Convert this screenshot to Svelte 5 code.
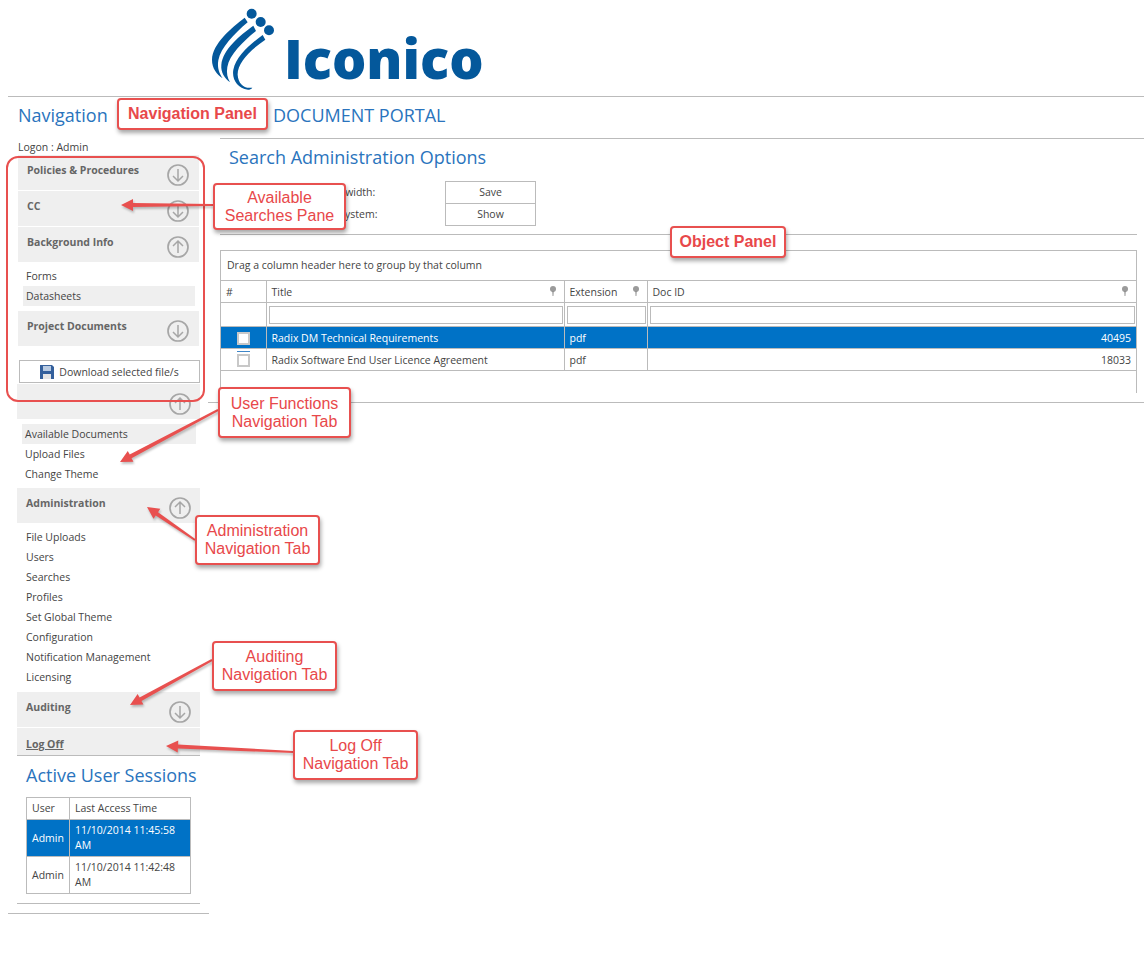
<script>
  const searches = [
    { name: 'Policies & Procedures', open: false },
    { name: 'CC', open: false },
    { name: 'Background Info', open: true, items: ['Forms', 'Datasheets'] },
    { name: 'Project Documents', open: false }
  ];
  const userItems = ['Available Documents', 'Upload Files', 'Change Theme'];
  const adminItems = ['File Uploads', 'Users', 'Searches', 'Profiles', 'Set Global Theme', 'Configuration', 'Notification Management', 'Licensing'];
  const docs = [
    { title: 'Radix DM Technical Requirements', ext: 'pdf', id: 40495, selected: true },
    { title: 'Radix Software End User Licence Agreement', ext: 'pdf', id: 18033 }
  ];
  const sessions = [
    { user: 'Admin', time: '11/10/2014 11:45:58 AM', selected: true },
    { user: 'Admin', time: '11/10/2014 11:42:48 AM' }
  ];
  const arrows = [
    [213, 205, 121, 205],
    [218, 410, 120, 462],
    [195, 540, 147, 507],
    [212, 660, 130, 705],
    [293, 752, 166, 746]
  ];

  // arrow body plus head, as one polygon
  function arrowPoints([x1, y1, x2, y2]) {
    const len = Math.hypot(x2 - x1, y2 - y1);
    const ux = (x2 - x1) / len, uy = (y2 - y1) / len;
    const nx = -uy, ny = ux;
    const bx = x2 - ux * 12, by = y2 - uy * 12;
    const p = [
      [x1 + nx * 1, y1 + ny * 1], [bx + nx * 2, by + ny * 2], [bx + nx * 6, by + ny * 6],
      [x2, y2],
      [bx - nx * 6, by - ny * 6], [bx - nx * 2, by - ny * 2], [x1 - nx * 1, y1 - ny * 1]
    ];
    return p.map((q) => q.join(',')).join(' ');
  }
</script>

{#snippet toggle(open)}
  <svg class="toggle" width="24" height="24" viewBox="0 0 24 24" fill="none" stroke="#a6a6a6">
    <circle cx="12" cy="12" r="10" stroke-width="1.7" />
    {#if open}
      <path d="M12 18V6.5M7 11l5-5 5 5" stroke-width="1.5" />
    {:else}
      <path d="M12 6v11.5M7 13l5 5 5-5" stroke-width="1.5" />
    {/if}
  </svg>
{/snippet}

{#snippet pin()}
  <svg class="pin" width="8" height="11" viewBox="0 0 8 11">
    <circle cx="4" cy="3" r="3" fill="#9a9a9a" />
    <path d="M3.3 5h1.4l-.3 5h-.8z" fill="#8a8a8a" />
  </svg>
{/snippet}

<div class="page">
  <header class="logo-bar">
    <svg class="logo-mark" width="80" height="94" viewBox="0 0 240 280" fill="#04589b">
      <circle cx="155" cy="40" r="15" />
      <circle cx="182" cy="65" r="15" />
      <circle cx="207" cy="90" r="15" />
      <path d="M134 52C95 82 37 130 36 178c0 26 14 44 32 56-10-14-17-32-13-54 7-38 48-80 88-114z" />
      <path d="M160 76c-38 28-92 70-96 118-2 22 10 40 26 52-8-14-11-28-8-46 6-36 46-76 86-108z" />
      <path d="M188 104c-36 26-80 64-88 104-5 28 12 56 44 60 5 0 10-2 13-6-26 4-42-12-44-38-2-34 36-74 83-106z" />
    </svg>
    <span class="logo-text">Iconico</span>
  </header>

  <div class="columns">
    <aside class="nav">
      <h2 class="nav-title">Navigation</h2>
      <div class="logon">Logon : Admin</div>

      <div class="searches">
        {#each searches as group}
          <div class="tab">
            <span>{group.name}</span>
            {@render toggle(group.open)}
          </div>
          {#if group.items}
            <ul class="links searches-links">
              {#each group.items as item, i}
                <li class:shaded={i === 1}>{item}</li>
              {/each}
            </ul>
          {/if}
        {/each}
        <button class="download" type="button">
          <svg width="14" height="14" viewBox="0 0 14 14">
            <path d="M0 0h12l2 2v12H0z" fill="#34609c" />
            <rect x="3" y="1" width="8" height="5" fill="#b9cbe2" />
            <rect x="3" y="9" width="8" height="5" fill="#e6e6e6" />
          </svg>
          Download selected file/s
        </button>
      </div>

      <div class="tabs">
        <div class="tab tab-blank">{@render toggle(true)}</div>
        <ul class="links user-links">
          {#each userItems as item, i}
            <li class:shaded={i === 0}>{item}</li>
          {/each}
        </ul>
        <div class="tab"><span>Administration</span>{@render toggle(true)}</div>
        <ul class="links admin-links">
          {#each adminItems as item}
            <li>{item}</li>
          {/each}
        </ul>
        <div class="tab"><span>Auditing</span>{@render toggle(false)}</div>
        <div class="tab logoff"><span>Log Off</span></div>
        <h2 class="sessions-title">Active User Sessions</h2>
        <table class="sessions">
          <thead>
            <tr><th class="user-col">User</th><th>Last Access Time</th></tr>
          </thead>
          <tbody>
            {#each sessions as s}
              <tr class:selected={s.selected}><td>{s.user}</td><td>{s.time}</td></tr>
            {/each}
          </tbody>
        </table>
        <div class="rule-inner"></div>
      </div>
      <div class="rule-outer"></div>
    </aside>

    <main class="content">
      <div class="portal">DOCUMENT PORTAL</div>
      <h2 class="section-title">Search Administration Options</h2>

      <div class="options">
        <div class="option"><span>Save column order and width:</span><button type="button">Save</button></div>
        <div class="option"><span>Show filter for column system:</span><button type="button">Show</button></div>
      </div>

      <div class="grid">
        <div class="group-hint">Drag a column header here to group by that column</div>
        <table class="docs">
          <colgroup><col class="c1" /><col class="c2" /><col class="c3" /><col /></colgroup>
          <thead>
            <tr>
              <th>#</th>
              <th><div class="head">Title{@render pin()}</div></th>
              <th><div class="head">Extension{@render pin()}</div></th>
              <th><div class="head">Doc ID{@render pin()}</div></th>
            </tr>
            <tr class="filters">
              <th></th>
              <th><input type="text" /></th>
              <th><input type="text" /></th>
              <th><input type="text" /></th>
            </tr>
          </thead>
          <tbody>
            {#each docs as doc}
              <tr class:selected={doc.selected}>
                <td class="check"><span class="box" class:marked={!doc.selected}></span></td>
                <td>{doc.title}</td>
                <td>{doc.ext}</td>
                <td class="num">{doc.id}</td>
              </tr>
            {/each}
          </tbody>
        </table>
      </div>
      <div class="rule-bottom"></div>
    </main>
  </div>

  <!-- annotations drawn over the screenshot -->
  <div class="ring"></div>
  <svg class="arrows" width="1144" height="961">
    {#each arrows as a}
      <polygon points={arrowPoints(a)} fill="#e8504f" />
    {/each}
  </svg>
  <div class="note bold n-nav">Navigation Panel</div>
  <div class="note n-search">Available<br />Searches Pane</div>
  <div class="note bold n-object">Object Panel</div>
  <div class="note n-user">User Functions<br />Navigation Tab</div>
  <div class="note n-admin">Administration<br />Navigation Tab</div>
  <div class="note n-audit">Auditing<br />Navigation Tab</div>
  <div class="note n-logoff">Log Off<br />Navigation Tab</div>
</div>

<style>
  :global(body) {
    background: #fff;
    color: #444;
    font-family: "Open Sans", "Noto Sans", sans-serif;
    font-size: 10.5px;
  }

  .page {
    position: relative;
    width: 1144px;
    height: 961px;
    overflow: hidden;
  }

  .logo-bar {
    height: 96px;
    margin-left: 8px;
    border-bottom: 1px solid #bbb;
    display: flex;
    align-items: flex-start;
    padding-left: 192px;
  }

  .logo-text {
    margin: 23px 0 0 4px;
    font-size: 54px;
    line-height: 70px;
    font-weight: 800;
    color: #04589b;
  }

  .columns {
    display: flex;
  }

  .nav {
    width: 201px;
    margin-left: 8px;
    flex: none;
  }

  .nav-title {
    margin: 0 0 0 10px;
    height: 36px;
    line-height: 36px;
    font-size: 18px;
    font-weight: 400;
    color: #2a74bd;
  }

  .logon {
    margin: 6px 0 0 10px;
    height: 16px;
    line-height: 16px;
  }

  .searches {
    margin-left: 10px;
    width: 181px;
  }

  .tab {
    height: 35px;
    margin-bottom: 1px;
    padding: 7px 9px 0 9px;
    box-sizing: border-box;
    background: #efefef;
    display: flex;
    justify-content: space-between;
    overflow: hidden;
    font-weight: 700;
    line-height: 16px;
    color: #666;
  }

  .toggle {
    flex: none;
    margin-top: 1px;
  }

  .links {
    list-style: none;
    margin: 0;
    padding: 0;
  }

  .links li {
    height: 20px;
    line-height: 20px;
    padding-left: 3px;
  }

  .links .shaded {
    background: #efefef;
  }

  .searches-links {
    padding: 3px 4px 5px 5px;
  }

  .download {
    display: flex;
    align-items: center;
    justify-content: center;
    gap: 5px;
    width: 181px;
    height: 23px;
    margin: 14px 0 0 1px;
    background: #fff;
    border: 1px solid #bbb;
    font: inherit;
    color: #444;
    padding: 0;
  }

  .tabs {
    margin: 1px 0 0 9px;
    width: 183px;
  }

  .tabs .tab {
    padding-right: 8px;
  }

  .tab-blank {
    justify-content: flex-end;
  }

  .user-links {
    padding: 4px 4px 4px 5px;
  }

  .admin-links {
    padding: 3px 0 5px 6px;
  }

  .admin-links li {
    padding-left: 3px;
  }

  .logoff {
    height: 28px;
    margin: 0;
    padding-top: 8px;
    border-bottom: 1px solid #bbb;
    text-decoration: underline;
  }

  .sessions-title {
    margin: 6px 0 0 9px;
    height: 26px;
    line-height: 26px;
    font-size: 18px;
    font-weight: 400;
    color: #2a74bd;
  }

  .sessions {
    margin: 9px 0 0 9px;
    width: 165px;
    border-collapse: collapse;
    line-height: 15px;
  }

  .sessions th,
  .sessions td {
    border: 1px solid #bbb;
    padding: 3px 5px;
    text-align: left;
    font-weight: 400;
  }

  .user-col {
    width: 32px;
  }

  .sessions .selected td {
    background: #0072c6;
    color: #fff;
  }

  .rule-inner {
    margin-top: 9px;
    border-top: 1px solid #bbb;
  }

  .rule-outer {
    margin-top: 9px;
    border-top: 1px solid #bbb;
  }

  .content {
    flex: 1;
    margin-left: 11px;
  }

  .portal {
    height: 41px;
    padding-left: 53px;
    box-sizing: content-box;
    line-height: 36px;
    font-size: 18px;
    color: #2a74bd;
    border-bottom: 1px solid #bbb;
  }

  .section-title {
    margin: 0 0 0 9px;
    height: 42px;
    line-height: 36px;
    font-size: 18px;
    font-weight: 400;
    color: #2a74bd;
  }

  .options {
    width: 917px;
    height: 53px;
    border-bottom: 1px solid #bbb;
  }

  .option {
    display: flex;
    align-items: center;
    height: 22px;
    padding-left: 9px;
  }

  .option span {
    width: 216px;
  }

  .option button {
    width: 91px;
    height: 23px;
    background: #fff;
    border: 1px solid #bbb;
    font: inherit;
    color: #444;
    padding: 0;
  }

  .grid {
    width: 917px;
    height: 143px;
    margin-top: 15px;
    box-sizing: border-box;
    border: 1px solid #bbb;
    border-bottom: 0;
  }

  .group-hint {
    height: 29px;
    line-height: 29px;
    padding-left: 6px;
  }

  .docs {
    width: 100%;
    table-layout: fixed;
    border-collapse: collapse;
  }

  .c1 { width: 45px; }
  .c2 { width: 298px; }
  .c3 { width: 83px; }

  .docs th,
  .docs td {
    border: 1px solid #bbb;
    height: 21px;
    padding: 0 5px;
    text-align: left;
    font-weight: 400;
  }

  .docs th:first-child,
  .docs td:first-child {
    border-left: 0;
  }

  .docs th:last-child,
  .docs td:last-child {
    border-right: 0;
  }

  .head {
    display: flex;
    justify-content: space-between;
    align-items: center;
    padding-right: 2px;
  }

  .filters th {
    padding: 1px 1px 1px 2px;
  }

  .filters input {
    display: block;
    width: 100%;
    height: 18px;
    box-sizing: border-box;
    border: 1px solid #bbb;
    background: #fff;
  }

  .docs .selected td {
    background: #0072c6;
    color: #fff;
  }

  .check {
    text-align: center !important;
  }

  .box {
    display: inline-block;
    width: 13px;
    height: 13px;
    box-sizing: border-box;
    vertical-align: middle;
    background: #fff;
    border: 2px solid #c8c8c8;
  }

  .box.marked {
    box-shadow: 0 -2px 0 0 #fff, 0 -3px 0 0 #3f86c8;
  }

  .num {
    text-align: right !important;
  }

  .rule-bottom {
    margin: 9px 0 0 -12px;
    border-top: 1px solid #bbb;
  }

  /* overlay */
  .ring {
    position: absolute;
    left: 6px;
    top: 156px;
    width: 199px;
    height: 246px;
    box-sizing: border-box;
    border: 2px solid #e8504f;
    border-radius: 12px;
  }

  .arrows {
    position: absolute;
    left: 0;
    top: 0;
    filter: drop-shadow(1px 2px 1px rgba(0, 0, 0, 0.25));
  }

  .note {
    position: absolute;
    box-sizing: border-box;
    display: flex;
    align-items: center;
    justify-content: center;
    text-align: center;
    background: #fff;
    border: 2px solid #e8504f;
    border-radius: 4px;
    box-shadow: 1px 3px 4px rgba(0, 0, 0, 0.35);
    font-family: "Liberation Sans", Arial, sans-serif;
    font-size: 16px;
    line-height: 18px;
    color: #e8484a;
  }

  .bold { font-weight: 700; }

  .n-nav { left: 117px; top: 98px; width: 151px; height: 32px; }
  .n-search { left: 213px; top: 183px; width: 133px; height: 47px; }
  .n-object { left: 670px; top: 226px; width: 116px; height: 32px; }
  .n-user { left: 218px; top: 387px; width: 133px; height: 51px; }
  .n-admin { left: 195px; top: 515px; width: 125px; height: 50px; }
  .n-audit { left: 212px; top: 641px; width: 125px; height: 50px; }
  .n-logoff { left: 293px; top: 730px; width: 125px; height: 50px; }
</style>
